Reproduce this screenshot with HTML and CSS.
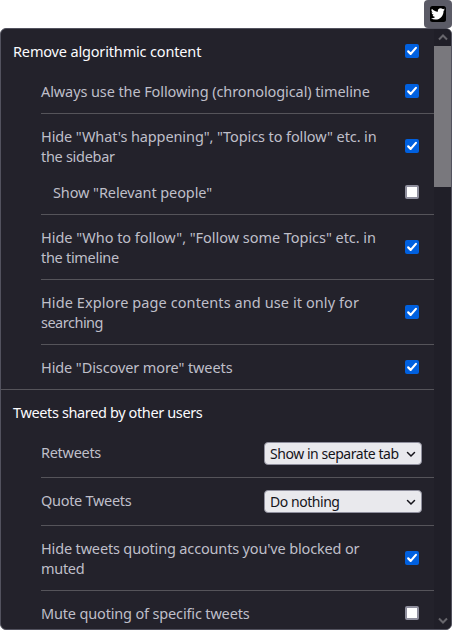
FILE: index.html
```html
<!DOCTYPE html>
<html lang="en">
<head>
<meta charset="utf-8">
<title>Options</title>
<link rel="stylesheet" href="styles.css">
</head>
<body>
<svg class="defs" width="0" height="0"><symbol id="tick" viewBox="0 0 14 14"><path d="M3.2 7.4 5.7 9.9 10.9 3.9" fill="none" stroke="#fff" stroke-width="2.2" stroke-linecap="round" stroke-linejoin="round"/></symbol></svg>
<div class="toolbar"><div class="tab"><svg width="16" height="16" viewBox="0 0 16 16"><rect width="16" height="16" rx="2.5" fill="#000"/><path transform="translate(1 .9) scale(.58)" fill="#fff" d="M23.95 4.57a10 10 0 0 1-2.82.77 4.96 4.96 0 0 0 2.16-2.72c-.95.56-2 .96-3.13 1.18a4.92 4.92 0 0 0-8.38 4.48C7.69 8.1 4.07 6.13 1.64 3.16a4.92 4.92 0 0 0 1.52 6.57 4.9 4.9 0 0 1-2.23-.61v.06a4.92 4.92 0 0 0 3.95 4.83 5 5 0 0 1-2.21.08 4.94 4.94 0 0 0 4.6 3.42A9.87 9.87 0 0 1 0 19.54a14 14 0 0 0 7.55 2.21c9.05 0 14-7.5 14-13.99 0-.21 0-.42-.02-.63a9.94 9.94 0 0 0 2.42-2.56z"/></svg></div></div>
<main class="panel">
<div class="content">
<section>
<div class="row heading"><span class="label normal">Remove algorithmic content</span><span class="box on"><svg><use href="#tick"/></svg></span></div>
<div class="group">
<div class="row first"><span class="label wide">Always use the Following (chronological) timeline</span><span class="box on"><svg><use href="#tick"/></svg></span></div>
<div class="row parent"><span class="label"><span class="wide">Hide "What's happening", "Topics to follow" etc. in</span><br>the sidebar</span><span class="box on"><svg><use href="#tick"/></svg></span></div>
<div class="row child"><span class="label wide">Show "Relevant people"</span><span class="box"></span></div>
<div class="row"><span class="label"><span class="wider">Hide "Who to follow", "Follow some Topics" etc. in</span><br>the timeline</span><span class="box on"><svg><use href="#tick"/></svg></span></div>
<div class="row"><span class="label"><span class="widest">Hide Explore page contents and use it only for</span><br><span class="tight">searching</span></span><span class="box on"><svg><use href="#tick"/></svg></span></div>
<div class="row last"><span class="label wide">Hide "Discover more" tweets</span><span class="box on"><svg><use href="#tick"/></svg></span></div>
</div>
</section>
<section>
<div class="row heading"><span class="label snug">Tweets shared by other users</span></div>
<div class="group">
<div class="row first choice"><span class="label">Retweets</span><span class="select"><span>Show in separate tab</span><svg width="10" height="7" viewBox="0 0 10 7"><path d="M1.5 1.5 5 5l3.5-3.5" fill="none" stroke="#15141a" stroke-width="1.5" stroke-linecap="round"/></svg></span></div>
<div class="row choice"><span class="label">Quote Tweets</span><span class="select"><span>Do nothing</span><svg width="10" height="7" viewBox="0 0 10 7"><path d="M1.5 1.5 5 5l3.5-3.5" fill="none" stroke="#15141a" stroke-width="1.5" stroke-linecap="round"/></svg></span></div>
<div class="row"><span class="label"><span class="normal">Hide tweets quoting accounts you've blocked or</span><br>muted</span><span class="box on"><svg><use href="#tick"/></svg></span></div>
<div class="row last"><span class="label normal">Mute quoting of specific tweets</span><span class="box"></span></div>
</div>
</section>
</div>
<div class="scrollbar">
<div class="arrow up"><svg width="10" height="7" viewBox="0 0 10 7"><path d="M1 5.5 5 1.5l4 4" fill="none" stroke="#67666c" stroke-width="2"/></svg></div>
<div class="thumb"></div>
<div class="arrow down"><svg width="10" height="7" viewBox="0 0 10 7"><path d="M1 1.5 5 5.5l4-4" fill="none" stroke="#67666c" stroke-width="2"/></svg></div>
</div>
</main>
</body>
</html>
```
FILE: styles.css
```css
* { box-sizing: border-box; }
body { margin: 0; height: 630px; overflow: hidden; display: flex; flex-direction: column; background: #fff; font: 14.5px/20px "Noto Sans", sans-serif; }
.defs { position: absolute; }
.toolbar { height: 28px; display: flex; justify-content: flex-end; }
.tab { width: 28px; height: 28px; display: flex; align-items: center; justify-content: center; background: #5b5b66; border-radius: 4px; }
.panel { height: 602px; display: flex; overflow: hidden; background: #23222b; border: 1px solid #52525e; border-radius: 6px; }
.content { width: 433px; overflow: hidden; color: #bfbfc9; }
.row { display: flex; align-items: center; justify-content: space-between; padding: 12px 12px 12px 0; border-bottom: 1px solid #55545a; }
.label { white-space: nowrap; letter-spacing: -0.3px; }
.normal { letter-spacing: -0.16px; }
.wide { letter-spacing: -0.1px; }
.wider { letter-spacing: -0.04px; }
.widest { letter-spacing: 0.09px; }
.snug { letter-spacing: -0.37px; }
.tight { letter-spacing: -0.5px; }
.heading { padding-left: 12px; border: 0; color: #fbfbfe; }
.group { padding-left: 40px; }
.first { padding-top: 8px; }
.parent { border: 0; padding-bottom: 16px; }
.child { padding-top: 0; }
.child .label { padding-left: 12px; }
.last { border: 0; }
.choice .label { padding-bottom: 3px; }
section { border-bottom: 1px solid #55545a; }
.box { flex: none; width: 14px; height: 14px; margin-right: 3px; background: #fff; border: 2px solid #8f8f9d; border-radius: 2px; }
.box.on { background: #0060df; border: 0; }
.box svg { display: block; width: 14px; height: 14px; }
.select { width: 158px; height: 23px; display: flex; align-items: center; justify-content: space-between; padding: 0 5px; color: #15141a; background: #e9e9ed; border: 1px solid #8f8f9d; border-radius: 4px; white-space: nowrap; font-size: 14px; letter-spacing: -0.45px; }
.select svg { margin-top: 1px; }
.scrollbar { width: 17px; display: flex; flex-direction: column; background: #201f28; }
.arrow { height: 17px; display: flex; align-items: center; justify-content: center; }
.thumb { height: 141px; background: #79787d; }
.down { margin-top: auto; }
```
